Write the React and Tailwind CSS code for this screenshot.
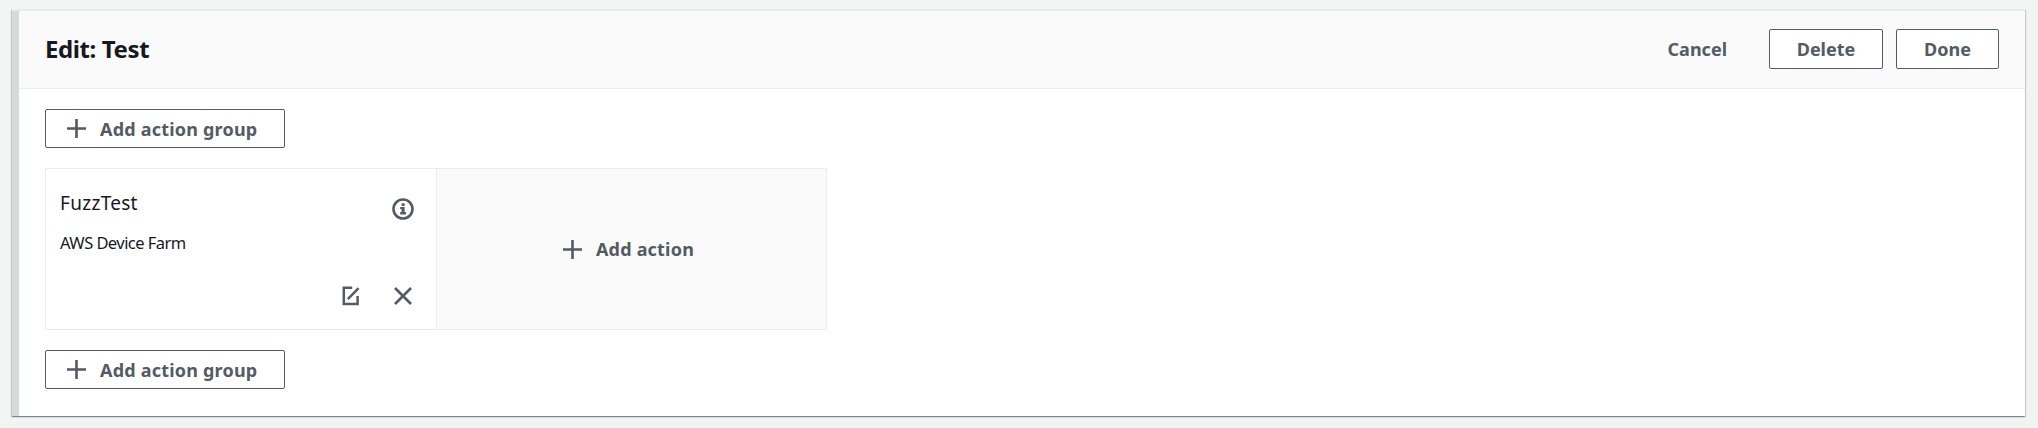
const PlusIcon = () => (
  <svg className="h-[19px] w-[19px] shrink-0" viewBox="0 0 19 19" fill="none" stroke="currentColor" strokeWidth="2.6">
    <path d="M9.5 0v19M0 9.5h19" />
  </svg>
);

const InfoIcon = () => (
  <svg className="h-[22px] w-[22px]" viewBox="0 0 22 22" fill="none">
    <circle cx="11" cy="11" r="9.5" stroke="currentColor" strokeWidth="2.6" />
    <path d="M9.6 5.2h3v2.8h-3zM8.2 9h4.4v5h1.4v2.4H8.2V14h1.4v-2.7H8.2z" fill="currentColor" />
  </svg>
);

const EditIcon = () => (
  <svg className="h-5 w-[18px]" viewBox="0 0 18 20" fill="none" stroke="currentColor" strokeWidth="2.5">
    <path d="M10.2 1.8H1.8v16.3h13.8V10M5.8 13.2L16.6 2.2" />
  </svg>
);

const CloseIcon = () => (
  <svg className="h-[18px] w-[18px]" viewBox="0 0 18 18" fill="none" stroke="currentColor" strokeWidth="2.6">
    <path d="M1 1l16 16M17 1L1 17" />
  </svg>
);

const AddActionGroup = () => (
  <button className="flex h-[39px] w-[240px] items-center gap-[14px] rounded-[2px] border border-[#545b64] bg-white pl-[21px]">
    <PlusIcon />
    <span className="whitespace-nowrap text-[18px] leading-none font-bold tracking-[0.2px]">Add action group</span>
  </button>
);

export default function App() {
  return (
    <main className="h-[428px] w-[2038px] bg-[#f2f3f3] pt-[9px] pl-3 font-['Noto_Sans',sans-serif] text-[#545b64]">
      <section className="flex h-[407px] w-[2013px] border-t-2 border-t-[#eaeded] bg-white shadow-[0_1px_1px_0_rgba(0,28,36,0.3),1px_1px_1px_0_rgba(0,28,36,0.15),-1px_1px_1px_0_rgba(0,28,36,0.15)]">
        <div className="w-[7px] bg-[#d5dbdb]" />
        <div className="flex-1">
          <header className="flex h-[78px] items-center justify-between border-b border-[#eaeded] bg-[#fafafa] pr-[26px] pb-[2px] pl-[26px]">
            <h1 className="text-[24px] leading-none font-bold tracking-[-0.4px] text-[#16191f]">Edit: Test</h1>
            <div className="flex items-center text-[18px] leading-none font-bold">
              <button className="mr-[42px]">Cancel</button>
              <button className="mr-[13px] h-10 w-[114px] rounded-[2px] border border-[#545b64] bg-white">Delete</button>
              <button className="h-10 w-[103px] rounded-[2px] border border-[#545b64] bg-white">Done</button>
            </div>
          </header>
          <div className="flex flex-col gap-5 pt-5 pl-[26px]">
            <AddActionGroup />
            <div className="flex h-[162px] w-[782px] border border-[#eaeded]">
              <article className="flex w-[391px] justify-between border-r border-[#eaeded] pt-6 pb-[23px] pl-[14px] text-[#16191f]">
                <div>
                  <h2 className="text-[19px] leading-5 tracking-[0.3px]">FuzzTest</h2>
                  <p className="mt-5 text-[16.5px] leading-5 tracking-[-0.55px]">AWS Device Farm</p>
                </div>
                <div className="flex flex-col items-end justify-between pt-[5px] pr-[22px] text-[#545b64]">
                  <InfoIcon />
                  <div className="flex items-center gap-[34px] pr-[2px]">
                    <EditIcon />
                    <CloseIcon />
                  </div>
                </div>
              </article>
              <button className="flex flex-1 items-center justify-center gap-[14px] bg-[#fafafa] pr-[6px]">
                <PlusIcon />
                <span className="text-[18px] leading-none font-bold tracking-[0.2px]">Add action</span>
              </button>
            </div>
            <AddActionGroup />
          </div>
        </div>
      </section>
    </main>
  );
}
